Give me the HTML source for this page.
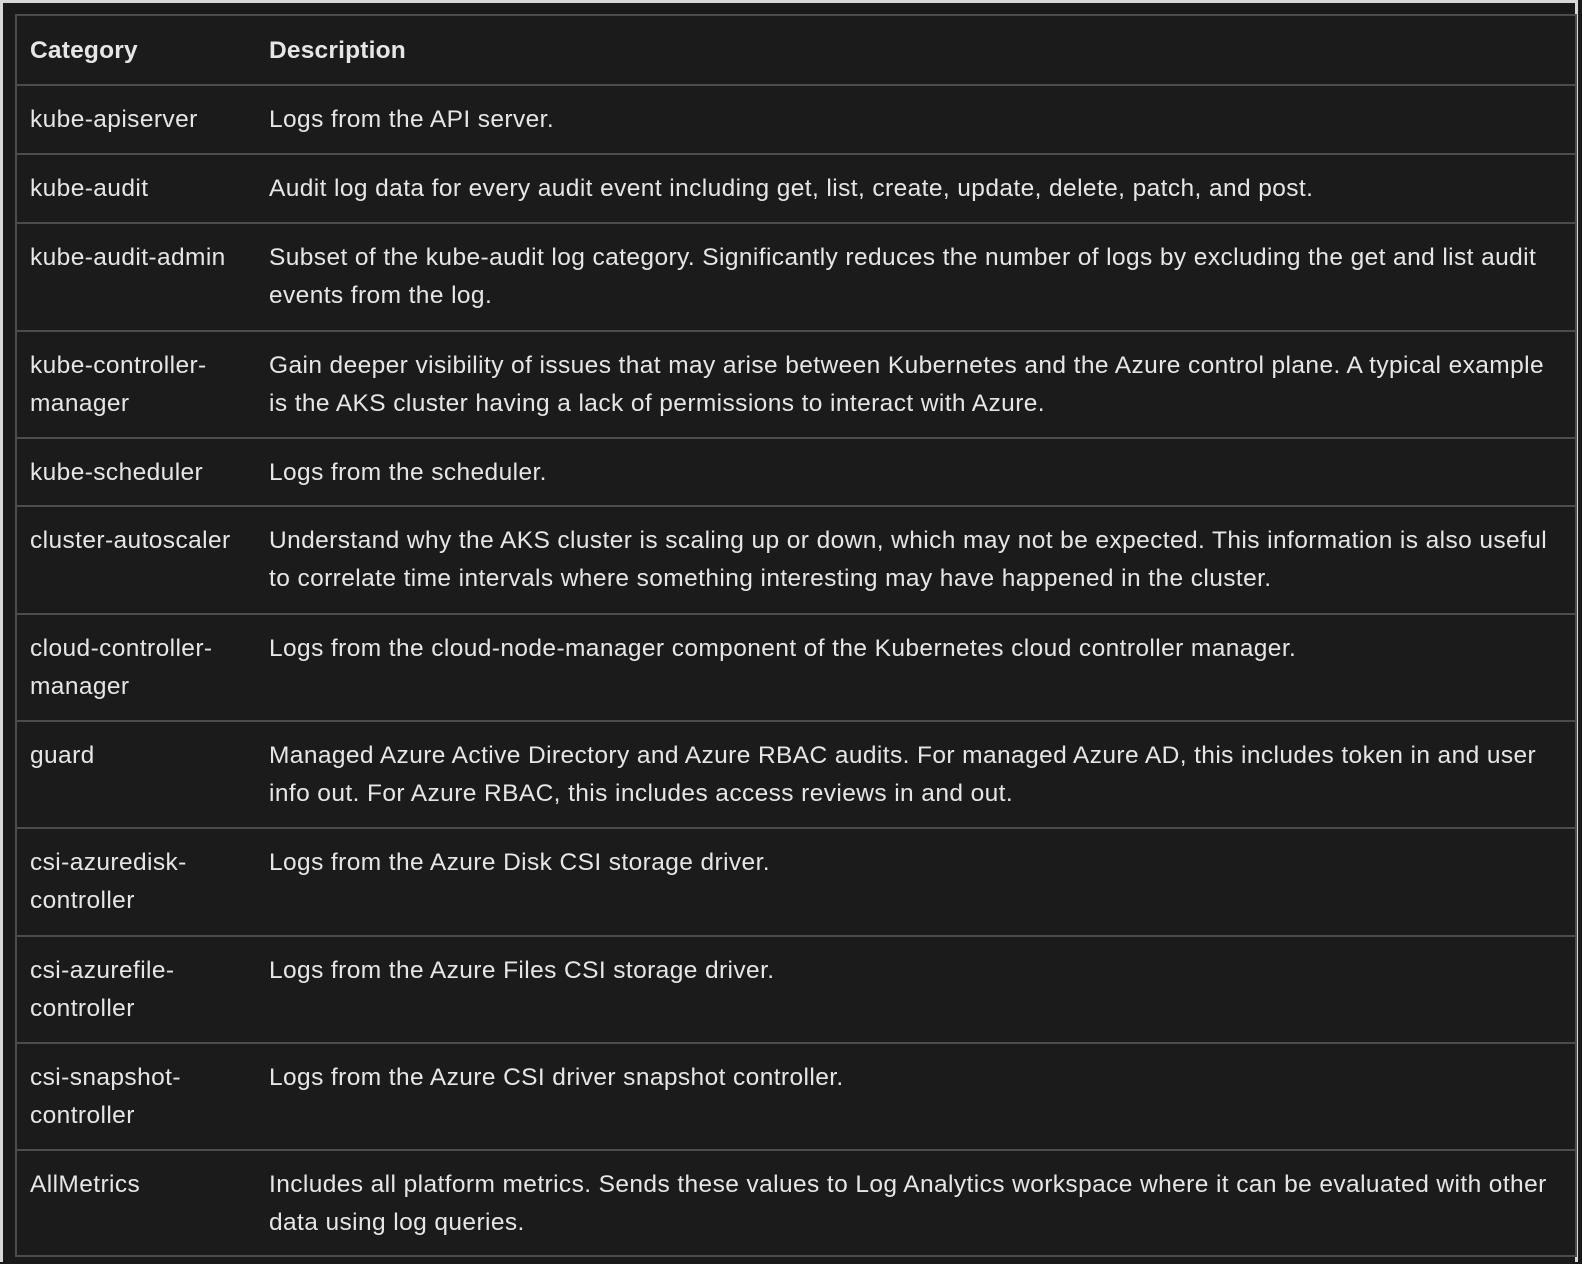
<!DOCTYPE html>
<html><head><meta charset="utf-8"><style>
body{margin:0;width:1582px;height:1264px;background:#1a1a1a;position:relative;overflow:hidden;font-family:"Liberation Sans",sans-serif;color:#e6e6e6;}
.ob{position:absolute;left:0;top:0;width:1578px;height:1262px;border-top:3px solid #d8d8d8;border-left:3px solid #d8d8d8;border-right:3px solid #d8d8d8;box-sizing:border-box}
.t{position:absolute;left:15px;top:14px;width:1562px;height:1243px;border:2px solid #4c4c4c;box-sizing:border-box;background:#1b1b1b}
.r{position:absolute;left:15px;width:1562px;border-top:2px solid #4c4c4c;box-sizing:border-box}
.c{position:absolute;font-size:24.5px;line-height:38px;letter-spacing:0.4px;white-space:normal}
.c1{left:30px}.c2{left:269px;width:1292px}
.h{font-weight:bold;letter-spacing:0.2px}
</style></head><body>
<div class="ob"></div>
<div class="t"></div>
<div class="r" style="top:84px"></div>
<div class="r" style="top:153px"></div>
<div class="r" style="top:222px"></div>
<div class="r" style="top:330px"></div>
<div class="r" style="top:437px"></div>
<div class="r" style="top:505px"></div>
<div class="r" style="top:613px"></div>
<div class="r" style="top:720px"></div>
<div class="r" style="top:827px"></div>
<div class="r" style="top:935px"></div>
<div class="r" style="top:1042px"></div>
<div class="r" style="top:1149px"></div>

<div class="c c1 h" style="top:32px">Category</div><div class="c c2 h" style="top:32px">Description</div>
<div class="c c1" style="top:101px">kube-apiserver</div><div class="c c2" style="top:101px">Logs from the API server.</div>
<div class="c c1" style="top:170px">kube-audit</div><div class="c c2" style="top:170px">Audit log data for every audit event including get, list, create, update, delete, patch, and post.</div>
<div class="c c1" style="top:239px">kube-audit-admin</div><div class="c c2" style="top:239px">Subset of the kube-audit log category. Significantly reduces the number of logs by excluding the get and list audit<br>events from the log.</div>
<div class="c c1" style="top:347px">kube-controller-<br>manager</div><div class="c c2" style="top:347px">Gain deeper visibility of issues that may arise between Kubernetes and the Azure control plane. A typical example<br>is the AKS cluster having a lack of permissions to interact with Azure.</div>
<div class="c c1" style="top:454px">kube-scheduler</div><div class="c c2" style="top:454px">Logs from the scheduler.</div>
<div class="c c1" style="top:522px">cluster-autoscaler</div><div class="c c2" style="top:522px">Understand why the AKS cluster is scaling up or down, which may not be expected. This information is also useful<br>to correlate time intervals where something interesting may have happened in the cluster.</div>
<div class="c c1" style="top:630px">cloud-controller-<br>manager</div><div class="c c2" style="top:630px">Logs from the cloud-node-manager component of the Kubernetes cloud controller manager.</div>
<div class="c c1" style="top:737px">guard</div><div class="c c2" style="top:737px">Managed Azure Active Directory and Azure RBAC audits. For managed Azure AD, this includes token in and user<br>info out. For Azure RBAC, this includes access reviews in and out.</div>
<div class="c c1" style="top:844px">csi-azuredisk-<br>controller</div><div class="c c2" style="top:844px">Logs from the Azure Disk CSI storage driver.</div>
<div class="c c1" style="top:952px">csi-azurefile-<br>controller</div><div class="c c2" style="top:952px">Logs from the Azure Files CSI storage driver.</div>
<div class="c c1" style="top:1059px">csi-snapshot-<br>controller</div><div class="c c2" style="top:1059px">Logs from the Azure CSI driver snapshot controller.</div>
<div class="c c1" style="top:1166px">AllMetrics</div><div class="c c2" style="top:1166px">Includes all platform metrics. Sends these values to Log Analytics workspace where it can be evaluated with other<br>data using log queries.</div>
</body></html>
